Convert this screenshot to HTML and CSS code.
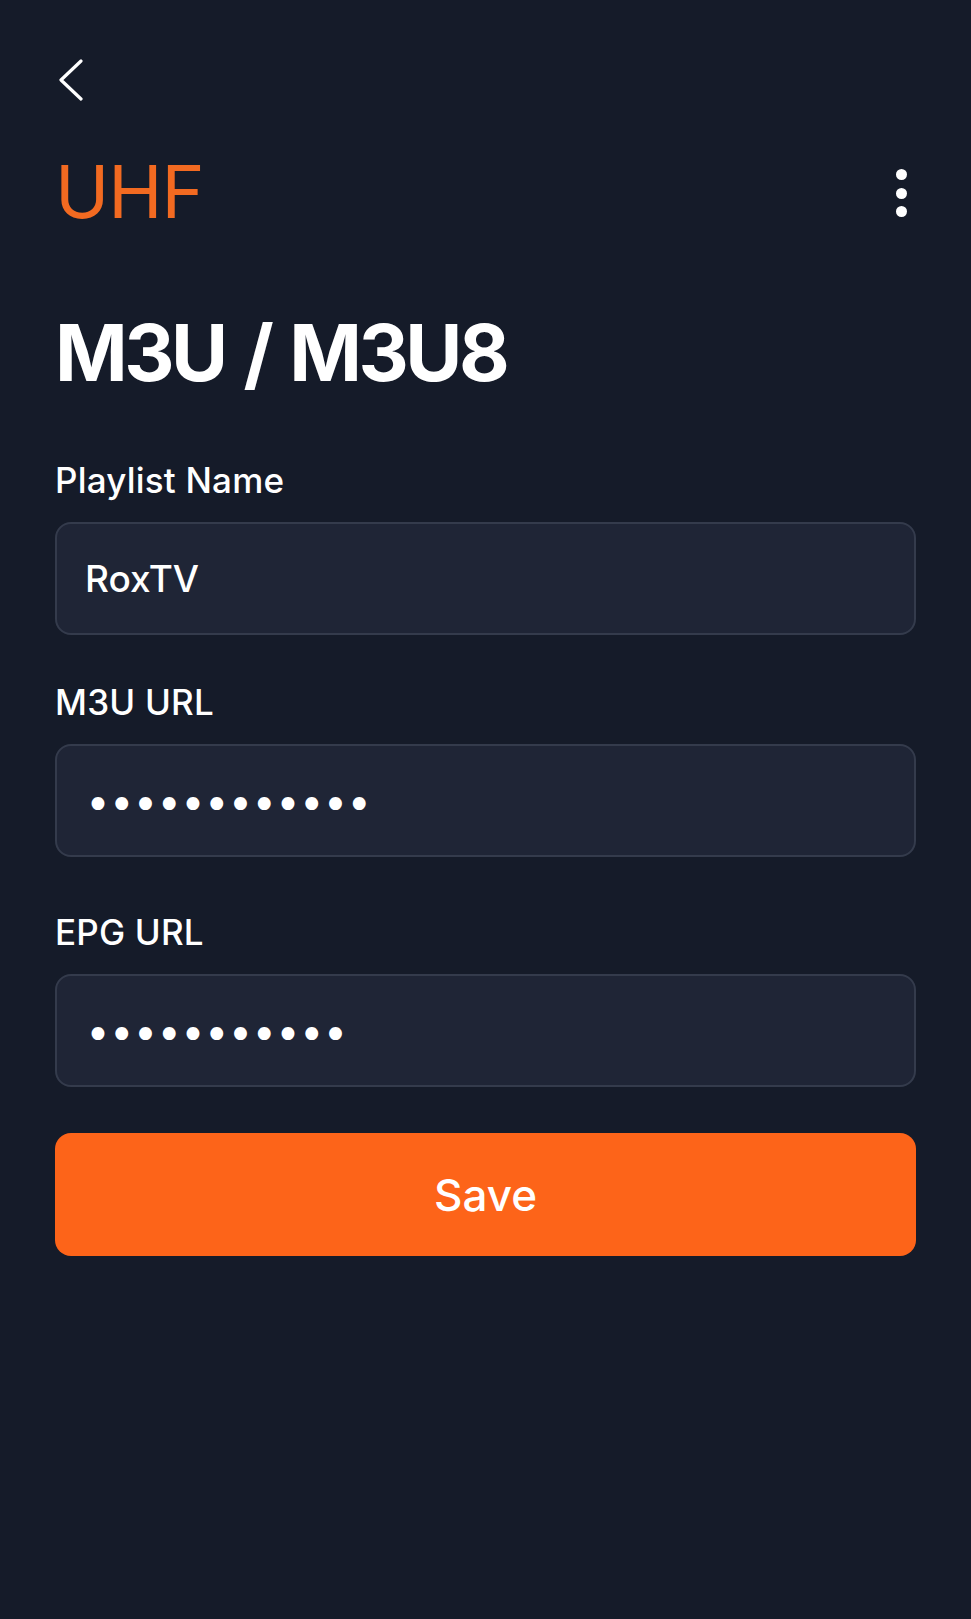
FILE: index.html
```html
<!DOCTYPE html>
<html lang="en">
<head>
<meta charset="utf-8">
<title>UHF - M3U / M3U8</title>
<link rel="stylesheet" href="styles.css">
</head>
<body>
<main class="screen">
  <div class="nav">
    <button class="back" aria-label="Back">
      <svg width="26" height="42" viewBox="0 0 26 42"><polyline points="23,2 3,21 23,40" fill="none" stroke="#ffffff" stroke-width="3.2" stroke-linecap="round" stroke-linejoin="round"/></svg>
    </button>
  </div>
  <header class="brand-row">
    <div class="brand">UHF</div>
    <button class="more" aria-label="More"><span></span><span></span><span></span></button>
  </header>
  <h1 class="title">M3U / M3U8</h1>
  <form class="form">
    <label class="field field-name">
      <span class="label">Playlist Name</span>
      <span class="input"><span class="value">RoxTV</span></span>
    </label>
    <label class="field field-m3u">
      <span class="label">M3U URL</span>
      <span class="input"><span class="dots">••••••••••••</span></span>
    </label>
    <label class="field field-epg">
      <span class="label">EPG URL</span>
      <span class="input"><span class="dots">•••••••••••</span></span>
    </label>
    <button type="button" class="save">Save</button>
  </form>
</main>
</body>
</html>
```
FILE: styles.css
```css
* { box-sizing: border-box; }
html, body { margin: 0; padding: 0; }
body {
  background: #151b29;
  font-family: Inter, "Noto Sans", sans-serif;
  color: #ffffff;
  min-height: 1619px;
}
.screen {
  padding: 60px 55px 0 55px;
  display: flex;
  flex-direction: column;
}
.nav { height: 40px; display: flex; align-items: center; }
.back {
  background: none; border: 0; padding: 0; margin-left: 3px;
  width: 26px; height: 42px; display: block;
}
.back svg { display: block; }
.brand-row {
  margin-top: 52px;
  display: flex;
  align-items: center;
  justify-content: space-between;
  height: 80px;
}
.brand {
  color: #f26a21;
  font-size: 73px;
  font-weight: 400;
  line-height: 80px;
  letter-spacing: -1px;
}
.more {
  background: none; border: 0; padding: 0;
  display: flex; flex-direction: column; gap: 7.5px;
  margin-right: 9px; margin-top: 2px;
}
.more span { width: 11px; height: 11px; border-radius: 50%; background: #ffffff; display: block; }
.title {
  margin: 76px 0 0 0;
  font-size: 78px;
  font-weight: 700;
  line-height: 90px;
  letter-spacing: -3.5px;
  word-spacing: 4px;
}
.form { display: flex; flex-direction: column; margin-top: 60px; }
.field { display: flex; flex-direction: column; margin-bottom: 45px; }
.field-m3u { margin-bottom: 53px; }
.field-epg { margin-bottom: 28px; }
.label {
  font-size: 35px;
  font-weight: 500;
  line-height: 44px;
  margin-bottom: 20px;
  letter-spacing: 0.2px;
}
.input {
  height: 113px;
  background: #1f2536;
  border: 2px solid #343b4c;
  border-radius: 16px;
  display: flex;
  align-items: center;
  padding: 0 28px;
}
.value { font-size: 37px; font-weight: 500; }
.dots {
  font-size: 44px;
  letter-spacing: -2.2px;
  font-family: "DejaVu Sans", sans-serif;
  line-height: 1;
  margin-top: 8px;
}
.save {
  margin-top: 18px;
  height: 123px;
  border: 0;
  border-radius: 16px;
  background: #fd6419;
  color: #ffffff;
  font-family: Inter, sans-serif;
  font-size: 44px;
  font-weight: 500;
}
```
